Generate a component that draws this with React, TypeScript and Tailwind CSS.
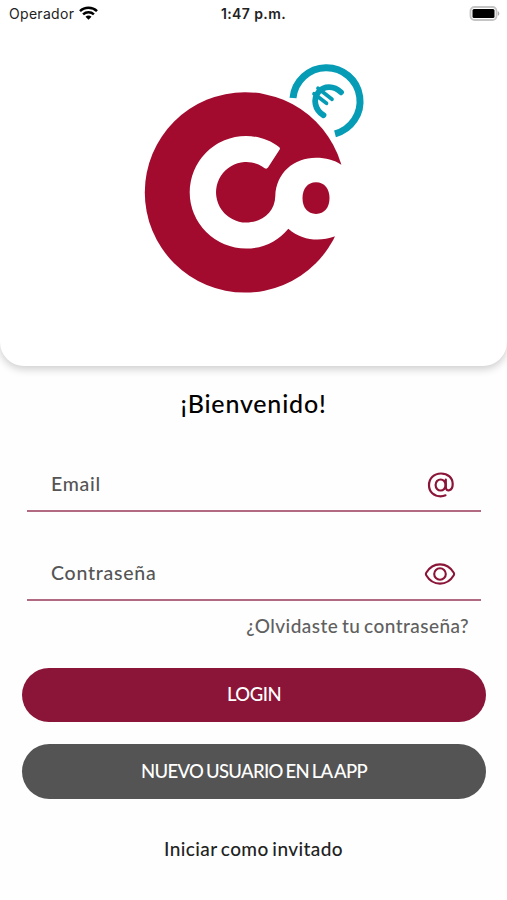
import React from "react";

function StatusBar() {
  return (
    <div className="grid h-[26px] grid-cols-3 items-center pl-[9px] pr-[7px] font-[Inter,sans-serif] text-[14px] font-normal text-[#222]">
      <div className="flex items-center gap-[5px]">
        <span className="tracking-[0.3px]">Operador</span>
        <svg className="h-[14px] w-[19px]" viewBox="0 0 19 14" fill="none" stroke="#000" strokeWidth="2.5">
          <path d="M1 5.2C5.6.7 13.4.7 18 5.2M4.1 8.4c3-2.8 7.8-2.8 10.8 0" />
          <path d="M9.5 13.7 6.5 10.7c1.700-1.500 4.300-1.500 6 0Z" fill="#000" stroke="none" />
        </svg>
      </div>
      <span className="-ml-[2px] text-center text-[14px] font-semibold tracking-[0.4px]">1:47 p.m.</span>
      <svg className="h-[15px] w-[31px] justify-self-end" viewBox="0 0 31 15">
        <rect x="1.500" y="1" width="26" height="13" rx="4" fill="#fff" stroke="#c4c4c4" strokeWidth="1.800" />
        <rect x="3.500" y="3" width="22" height="9" rx="1.500" fill="#000" />
        <path d="M28.800 5.200c2 .6 2 4 0 4.600Z" fill="#aaa" />
      </svg>
    </div>
  );
}

function Logo() {
  return (
    <svg className="h-[240px] w-[230px]" viewBox="140 58 230 240" fill="none">
      <circle cx="245" cy="192.400" r="100.200" fill="#a20a2e" />
      <path
        d="M279 146.900Q280.600 148.100 279.500 149.800L268 167.500Q266.700 169.400 264.700 168.200A30.300 30.300 0 1 0 246 222.600C262 222.600 275 212 275.300 196C276 173 294 157.800 316 157.800C326 157.800 334 160 341.300 164.700L350 166V236L334.500 236.600C319 242 302 240.500 288.300 228.700C278 241.500 263 248.600 246 248.600A56.300 56.300 0 1 1 246 136C258 136 270 140 279 146.900Z"
        fill="#fff"
      />
      <path d="M316 182.200c8.500 0 13.500 6.500 13.500 15.900s-5 15.900-13.500 15.900-13.500-6.500-13.500-15.900 5-15.900 13.500-15.900Z" fill="#a20a2e" />
      <path d="M293 98A33.600 33.600 0 1 1 335 133.800" stroke="#069cb5" strokeWidth="7" />
      <g stroke="#069cb5" strokeLinecap="round">
        <path d="M341 92.300C334 85.300 324 85.500 318.500 92C312.800 99 314.500 109.500 323.500 115.300" strokeWidth="5.800" />
        <path d="M318 88.200 332 99.300M314 93.800 326.500 103.300" strokeWidth="3.700" />
      </g>
    </svg>
  );
}

function AtIcon() {
  return (
    <svg className="h-[26px] w-[28px]" viewBox="0 0 28 26" fill="none" stroke="#8a1538" strokeWidth="2.200" strokeLinecap="round" strokeLinejoin="round">
      <ellipse cx="13.600" cy="13" rx="5" ry="5.500" />
      <path d="M18.800 7.500V15c0 5.500 6.900 4.300 6.900-3C25.700 5.600 20.800 1.500 14 1.500 7 1.500 2 6.500 2 13.200 2 20 7 24.300 13.500 24.300c1.900 0 3.500-.3 5-1" />
    </svg>
  );
}

function EyeIcon() {
  return (
    <svg className="h-[22px] w-[32px]" viewBox="0 0 32 22" fill="none" stroke="#8a1538" strokeWidth="2.100">
      <path d="M2.200 9.800C5.500 4.300 10.300 1.400 16 1.400s10.500 2.900 13.800 8.400q.7 1.200 0 2.400C26.500 17.700 21.700 20.600 16 20.600S5.500 17.700 2.200 12.200q-.7-1.200 0-2.400Z" />
      <circle cx="16" cy="11" r="5.800" />
    </svg>
  );
}

function Field({ label, children }: { label: string; children: React.ReactNode }) {
  return (
    <div>
      <div className="flex h-[52px] items-center justify-between pl-[24px] pr-[26px] pt-[2px] text-[#555]">
        <span className="-mt-[2px] text-[19.500px] tracking-[0.75px]">{label}</span>
        {children}
      </div>
      <div className="h-[2px] bg-[#b26a83]" />
    </div>
  );
}

export default function App() {
  return (
    <main className="flex h-[900px] w-full flex-col overflow-hidden bg-[#fefefe] font-[Lato,sans-serif] font-medium">
      <header className="h-[366px] shrink-0 rounded-b-[24px] bg-white shadow-[0_3px_8px_rgba(0,0,0,0.2)]">
        <StatusBar />
        <div className="flex justify-center pt-[32px] pl-[3px]">
          <Logo />
        </div>
      </header>
      <h1 className="mt-[19px] text-center text-[25px] leading-9 tracking-[0.8px] text-black">¡Bienvenido!</h1>
      <form className="ml-[27px] mr-[26px] mt-[37px] flex flex-col gap-[35px]">
        <Field label="Email">
          <AtIcon />
        </Field>
        <Field label="Contraseña">
          <div className="-mr-[1px]">
            <EyeIcon />
          </div>
        </Field>
      </form>
      <a className="mt-[11px] pr-[38px] text-right text-[19px] leading-7 tracking-[0.45px] [word-spacing:-1.5px] text-[#606060]">¿Olvidaste tu contraseña?</a>
      <div className="ml-[22px] mr-[21px] mt-[28px] flex flex-col gap-[22px] text-[18.500px] text-white">
        <button className="h-[54px] rounded-full bg-[#8a1538] tracking-[-0.5px]">LOGIN</button>
        <button className="h-[55px] rounded-full bg-[#545454] tracking-[-0.68px] [word-spacing:-1.2px]">NUEVO USUARIO EN LA APP</button>
      </div>
      <a className="mt-9 text-center text-[19px] leading-7 tracking-[0.4px] [word-spacing:-1.5px] text-[#222]">Iniciar como invitado</a>
    </main>
  );
}
